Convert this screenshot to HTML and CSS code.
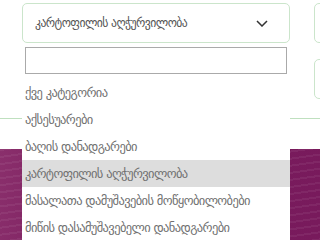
FILE: index.html
```html
<!DOCTYPE html>
<html lang="ka">
<head>
    <meta charset="UTF-8">
    <title>კატეგორიები</title>
    <link rel="stylesheet" href="styles.css">
</head>
<body>
    <div class="page">
        <div class="filters">
            <div class="select-box">
                <span class="select-value">კარტოფილის აღჭურვილობა</span>
                <svg class="chevron" width="12" height="7" viewBox="0 0 12 7">
                    <path d="M1 1l5 5 5-5" fill="none" stroke="#333" stroke-width="1.5"/>
                </svg>
            </div>
            <div class="side">
                <div class="side-box"></div>
                <div class="side-box"></div>
            </div>
        </div>
        <div class="divider"></div>
        <div class="banner"></div>
    </div>

    <div class="dropdown">
        <div class="search">
            <input type="text" class="search-field">
        </div>
        <ul class="results">
            <li>ქვე კატეგორია</li>
            <li>აქსესუარები</li>
            <li>ბაღის დანადგარები</li>
            <li class="active">კარტოფილის აღჭურვილობა</li>
            <li>მასალათა დამუშავების მოწყობილობები</li>
            <li>მიწის დასამუშავებელი დანადგარები</li>
            <li>მორწყვის სისტემები</li>
            <li>სათესი მანქანები</li>
            <li>ტრაქტორები</li>
            <li>სათადარიგო ნაწილები</li>
            <li>ცხოველების მოვლა</li>
            <li>ხის დამუშავება</li>
            <li>სასუქები</li>
            <li>ენერგია</li>
            <li>ინსტრუმენტები</li>
            <li>სხვა</li>
        </ul>
    </div>
</body>
</html>
```

FILE: styles.css
```css
body {
    margin: 0;
    font-family: "DejaVu Sans", sans-serif;
    background: #fff;
    overflow: hidden;
}

.page {
    padding-top: 3px;
    overflow: hidden;
}

.filters {
    display: flex;
    gap: 24px;
    padding-left: 22px;
}

.select-box {
    flex-shrink: 0;
    width: 268px;
    height: 40px;
    box-sizing: border-box;
    border: 1px solid #cbe5cb;
    border-radius: 5px;
    display: flex;
    align-items: center;
    justify-content: space-between;
    padding: 0 21px 0 12px;
}

.select-value {
    font-size: 11.7px;
    letter-spacing: -0.55px;
    color: #555;
    white-space: nowrap;
}

.side {
    flex-shrink: 0;
    display: flex;
    flex-direction: column;
    gap: 16px;
}

.side-box {
    width: 100px;
    height: 40px;
    box-sizing: border-box;
    border: 1px solid #cbe5cb;
    border-radius: 5px;
}

.divider {
    margin-top: 19px;
    border-top: 1px solid #bfe0bf;
}

.banner {
    margin-top: 30px;
    height: 100px;
    background:
        repeating-linear-gradient(172deg, rgba(255,255,255,0.06) 0 2px, transparent 2px 7px),
        linear-gradient(100deg, #8a2f6c 0%, #7b1d5e 30%, #781a5c 100%);
}

/* dropdown */
.dropdown {
    position: absolute;
    left: 22px;
    top: 43px;
    width: 268px;
    background: #fff;
}

.search {
    padding: 4px 3px;
}

.search-field {
    display: block;
    width: 100%;
    height: 27px;
    box-sizing: border-box;
    border: 1px solid #aaa;
    margin: 0;
    padding: 0 6px;
}

.results {
    list-style: none;
    margin: 0;
    padding: 0;
    height: 170px;
    overflow-y: scroll;
}

.results li {
    height: 27px;
    line-height: 27px;
    padding: 0 3px;
    font-size: 12.5px;
    letter-spacing: -0.6px;
    color: #707070;
    white-space: nowrap;
}

.results li:first-child {
    margin-top: 1px;
}

.results li.active {
    background: #ddd;
}

.results::-webkit-scrollbar {
    width: 8px;
}

.results::-webkit-scrollbar-track {
    background: #ddd;
}

.results::-webkit-scrollbar-thumb {
    background: #666;
    border-radius: 4px;
}
```
